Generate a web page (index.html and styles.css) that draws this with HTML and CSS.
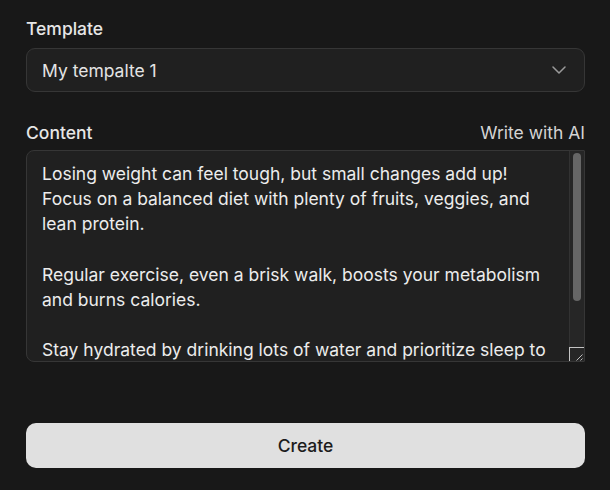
FILE: index.html
```html
<!DOCTYPE html>
<html lang="en">
<head>
<meta charset="utf-8">
<title>Template</title>
<link rel="stylesheet" href="styles.css">
</head>
<body>
<main class="form">
  <label class="label">Template</label>
  <div class="select">
    <span>My tempalte 1</span>
    <svg class="chevron" width="14" height="8" viewBox="0 0 14 8"><path d="M1 1l6 6 6-6" fill="none" stroke="#9a9a9a" stroke-width="1.5" stroke-linecap="round" stroke-linejoin="round"/></svg>
  </div>
  <div class="row">
    <label class="label">Content</label>
    <span class="ai">Write with AI</span>
  </div>
  <div class="editor">
    <textarea class="content">Losing weight can feel tough, but small changes add up! Focus on a balanced diet with plenty of fruits, veggies, and lean protein.

Regular exercise, even a brisk walk, boosts your metabolism and burns calories.

Stay hydrated by drinking lots of water and prioritize sleep to help your body recover and keep cravings in check.

Be patient and consistent, and celebrate every small win along the way!</textarea>
    <div class="scrollbar">
      <div class="track"><div class="thumb"></div></div>
      <div class="resizer">
        <svg width="14" height="14" viewBox="0 0 14 14"><path d="M12.5 6.5l-6 6M12.5 10.5l-2 2" stroke="#bdbdbd" stroke-width="1" fill="none"/></svg>
      </div>
    </div>
  </div>
  <button class="create">Create</button>
</main>
</body>
</html>
```
FILE: styles.css
```css
html, body {
  margin: 0;
  padding: 0;
  background: #181818;
  color-scheme: dark;
}
.form {
  display: flex;
  flex-direction: column;
  padding: 19px 25px 0 26px;
  font-family: Inter, "Noto Sans", sans-serif;
}
.label {
  font-size: 17.5px;
  line-height: 20px;
  font-weight: 500;
  color: #e6e6e6;
}
.select {
  margin-top: 9px;
  height: 44px;
  box-sizing: border-box;
  border: 1px solid #363636;
  border-radius: 9px;
  background: #202020;
  display: flex;
  align-items: center;
  justify-content: space-between;
  padding: 0 18px 0 15px;
  font-size: 17.5px;
  color: #e4e4e4;
}
.chevron { display: block; }
.row {
  margin-top: 31px;
  display: flex;
  justify-content: space-between;
  align-items: center;
}
.ai {
  font-size: 17.5px;
  line-height: 20px;
  color: #d4d4d4;
}
.editor {
  margin-top: 7px;
  height: 212px;
  box-sizing: border-box;
  display: flex;
  background: #202020;
  border: 1px solid #363636;
  border-radius: 8px 1px 1px 8px;
  overflow: hidden;
}
.content {
  flex: 1;
  min-width: 0;
  height: 100%;
  box-sizing: border-box;
  margin: 0;
  padding: 10px 15px;
  font-family: Inter, "Noto Sans", sans-serif;
  font-size: 17.5px;
  line-height: 25.2px;
  color: #ececec;
  background: transparent;
  border: none;
  outline: none;
  resize: none;
  overflow: hidden;
}
.scrollbar {
  width: 14px;
  display: flex;
  flex-direction: column;
  background: #262626;
  border-left: 1px solid #323232;
}
.track {
  flex: 1;
  padding: 2px 3px 0 3px;
}
.thumb {
  height: 148px;
  border-radius: 4px;
  background: #666666;
}
.resizer {
  height: 14px;
  box-sizing: border-box;
  border-top: 1px solid #c4c4c4;
  border-left: 1px solid #c4c4c4;
  margin-left: -1px;
}
.resizer svg { display: block; }
.create {
  margin-top: 61px;
  height: 45px;
  border: none;
  border-radius: 10px;
  background: #e0e0e0;
  color: #1c1c1c;
  font-family: Inter, "Noto Sans", sans-serif;
  font-size: 17.5px;
  font-weight: 500;
}
```
